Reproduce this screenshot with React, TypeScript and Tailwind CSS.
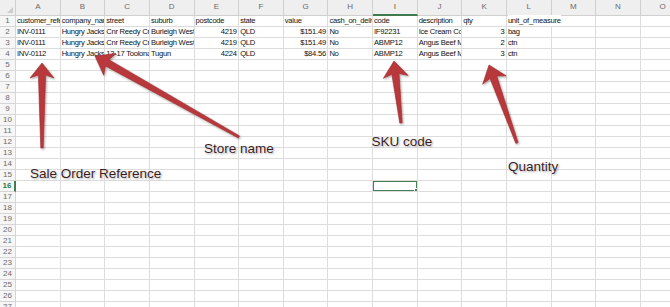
import React from "react";

const COLS = ["A", "B", "C", "D", "E", "F", "G", "H", "I", "J", "K", "L", "M", "N", "O"];
const NROWS = 27;

type Cell = { t: string; r?: boolean; ov?: boolean };

const DATA: Record<number, Record<string, Cell>> = {
  1: {
    A: { t: "customer_reference" },
    B: { t: "company_name" },
    C: { t: "street" },
    D: { t: "suburb" },
    E: { t: "postcode" },
    F: { t: "state" },
    G: { t: "value" },
    H: { t: "cash_on_delivery" },
    I: { t: "code" },
    J: { t: "description" },
    K: { t: "qty" },
    L: { t: "unit_of_measure", ov: true },
  },
  2: {
    A: { t: "INV-0111" },
    B: { t: "Hungry Jacks" },
    C: { t: "Cnr Reedy Creek Rd" },
    D: { t: "Burleigh West" },
    E: { t: "4219", r: true },
    F: { t: "QLD" },
    G: { t: "$151.49", r: true },
    H: { t: "No" },
    I: { t: "IF92231" },
    J: { t: "Ice Cream Cone" },
    K: { t: "3", r: true },
    L: { t: "bag" },
  },
  3: {
    A: { t: "INV-0111" },
    B: { t: "Hungry Jacks" },
    C: { t: "Cnr Reedy Creek Rd" },
    D: { t: "Burleigh West" },
    E: { t: "4219", r: true },
    F: { t: "QLD" },
    G: { t: "$151.49", r: true },
    H: { t: "No" },
    I: { t: "ABMP12" },
    J: { t: "Angus Beef Mince" },
    K: { t: "2", r: true },
    L: { t: "ctn" },
  },
  4: {
    A: { t: "INV-0112" },
    B: { t: "Hungry Jacks" },
    C: { t: "13-17 Toolona St" },
    D: { t: "Tugun" },
    E: { t: "4224", r: true },
    F: { t: "QLD" },
    G: { t: "$84.56", r: true },
    H: { t: "No" },
    I: { t: "ABMP12" },
    J: { t: "Angus Beef Mince" },
    K: { t: "3", r: true },
    L: { t: "ctn" },
  },
};

function arrowPoints(x1: number, y1: number, x2: number, y2: number, headLen = 15, headW = 11.5) {
  const dx = x2 - x1;
  const dy = y2 - y1;
  const len = Math.hypot(dx, dy);
  const ux = dx / len;
  const uy = dy / len;
  const nx = -uy;
  const ny = ux;
  const tailW = 1.2;
  const neckW = 3.6;
  const bx = x2 - ux * headLen;
  const by = y2 - uy * headLen;
  const kx = x2 - ux * (headLen - 3);
  const ky = y2 - uy * (headLen - 3);
  const pts = [
    [x1 + nx * tailW, y1 + ny * tailW],
    [kx + nx * neckW, ky + ny * neckW],
    [bx + nx * headW, by + ny * headW],
    [x2, y2],
    [bx - nx * headW, by - ny * headW],
    [kx - nx * neckW, ky - ny * neckW],
    [x1 - nx * tailW, y1 - ny * tailW],
  ];
  return pts.map((p) => `${p[0].toFixed(2)},${p[1].toFixed(2)}`).join(" ");
}

const ARROWS: [number, number, number, number, number, number][] = [
  [42, 148, 42, 63, 15, 12],
  [239, 137, 95, 56, 17, 12.5],
  [401, 123, 394, 61, 16, 12.5],
  [517, 143, 489, 65, 16, 12.5],
];

function Label({ text, className }: { text: string; className: string }) {
  return (
    <div
      className={`absolute whitespace-nowrap text-[13.5px] leading-none text-[#3a1c1c] [text-shadow:0_0_2px_#fff,0_0_2px_#fff,1px_1px_2px_rgba(0,0,0,0.45)] ${className}`}
    >
      {text}
    </div>
  );
}

export default function App() {
  const cells: React.ReactNode[] = [];

  cells.push(
    <div key="corner" className="relative bg-[#efefef] border-r border-b border-[#d0d0d0]">
      <div className="absolute right-[2px] bottom-[2px] w-0 h-0 border-l-[6px] border-l-transparent border-b-[6px] border-b-[#cdcdcd]" />
    </div>
  );
  COLS.forEach((c) => {
    const sel = c === "I";
    cells.push(
      <div
        key={`h-${c}`}
        className={`flex items-center justify-center bg-[#efefef] border-r border-[#d0d0d0] text-[8px] ${
          sel ? "border-b-2 border-b-[#3f7d50] text-[#2f7a46]" : "border-b text-[#6a6a6a]"
        }`}
      >
        {c}
      </div>
    );
  });

  for (let r = 1; r <= NROWS; r++) {
    const selRow = r === 16;
    cells.push(
      <div
        key={`r-${r}`}
        className={`flex items-center justify-center bg-[#f6f6f6] border-b border-[#d6d6d6] text-[8px] ${
          selRow ? "border-r-2 border-r-[#3f7d50] text-[#2f7a46] font-bold" : "border-r text-[#6a6a6a]"
        }`}
      >
        {r}
      </div>
    );
    COLS.forEach((c) => {
      const d = DATA[r]?.[c];
      const isSel = selRow && c === "I";
      cells.push(
        <div
          key={`${r}-${c}`}
          className={`relative flex items-center border-r border-b border-[#dcdcdc] text-[7.6px] tracking-[-0.25px] text-[#111] whitespace-nowrap ${
            d?.ov ? "overflow-visible z-10" : "overflow-hidden"
          } ${d?.r ? "justify-end pr-[1.5px]" : "justify-start pl-[1px]"}`}
        >
          {d ? <span className={d.ov ? "bg-white" : ""}>{d.t}</span> : null}
          {isSel ? (
            <div className="absolute -left-[1px] -top-[1px] w-[calc(100%+2px)] h-[calc(100%+2px)] border-2 border-[#467f55]">
              <div className="absolute -right-[3px] -bottom-[3px] w-[5px] h-[5px] bg-[#467f55] border border-white" />
            </div>
          ) : null}
        </div>
      );
    });
  }

  return (
    <div className="relative w-[670px] h-[307px] overflow-hidden bg-white font-['Liberation_Sans',Arial,sans-serif]">
      <div className="grid w-[685px] grid-cols-[16px_repeat(15,44.63px)] grid-rows-[15.5px_repeat(27,11px)]">
        {cells}
      </div>
      <svg className="absolute left-0 top-0 pointer-events-none" width="670" height="307" viewBox="0 0 670 307">
        <defs>
          <filter id="sh" x="-20%" y="-20%" width="140%" height="140%">
            <feDropShadow dx="1" dy="1.2" stdDeviation="1" floodColor="#000" floodOpacity="0.35" />
          </filter>
        </defs>
        {ARROWS.map((a, i) => (
          <polygon
            key={i}
            points={arrowPoints(a[0], a[1], a[2], a[3], a[4], a[5])}
            fill="#b8393b"
            stroke="#9a2a2d"
            strokeWidth="0.6"
            strokeLinejoin="round"
            filter="url(#sh)"
          />
        ))}
      </svg>
      <Label text="Sale Order Reference" className="left-[30px] top-[166.6px]" />
      <Label text="Store name" className="left-[204px] top-[141.6px]" />
      <Label text="SKU code" className="left-[371.5px] top-[134.6px]" />
      <Label text="Quantity" className="left-[508px] top-[160px]" />
    </div>
  );
}
